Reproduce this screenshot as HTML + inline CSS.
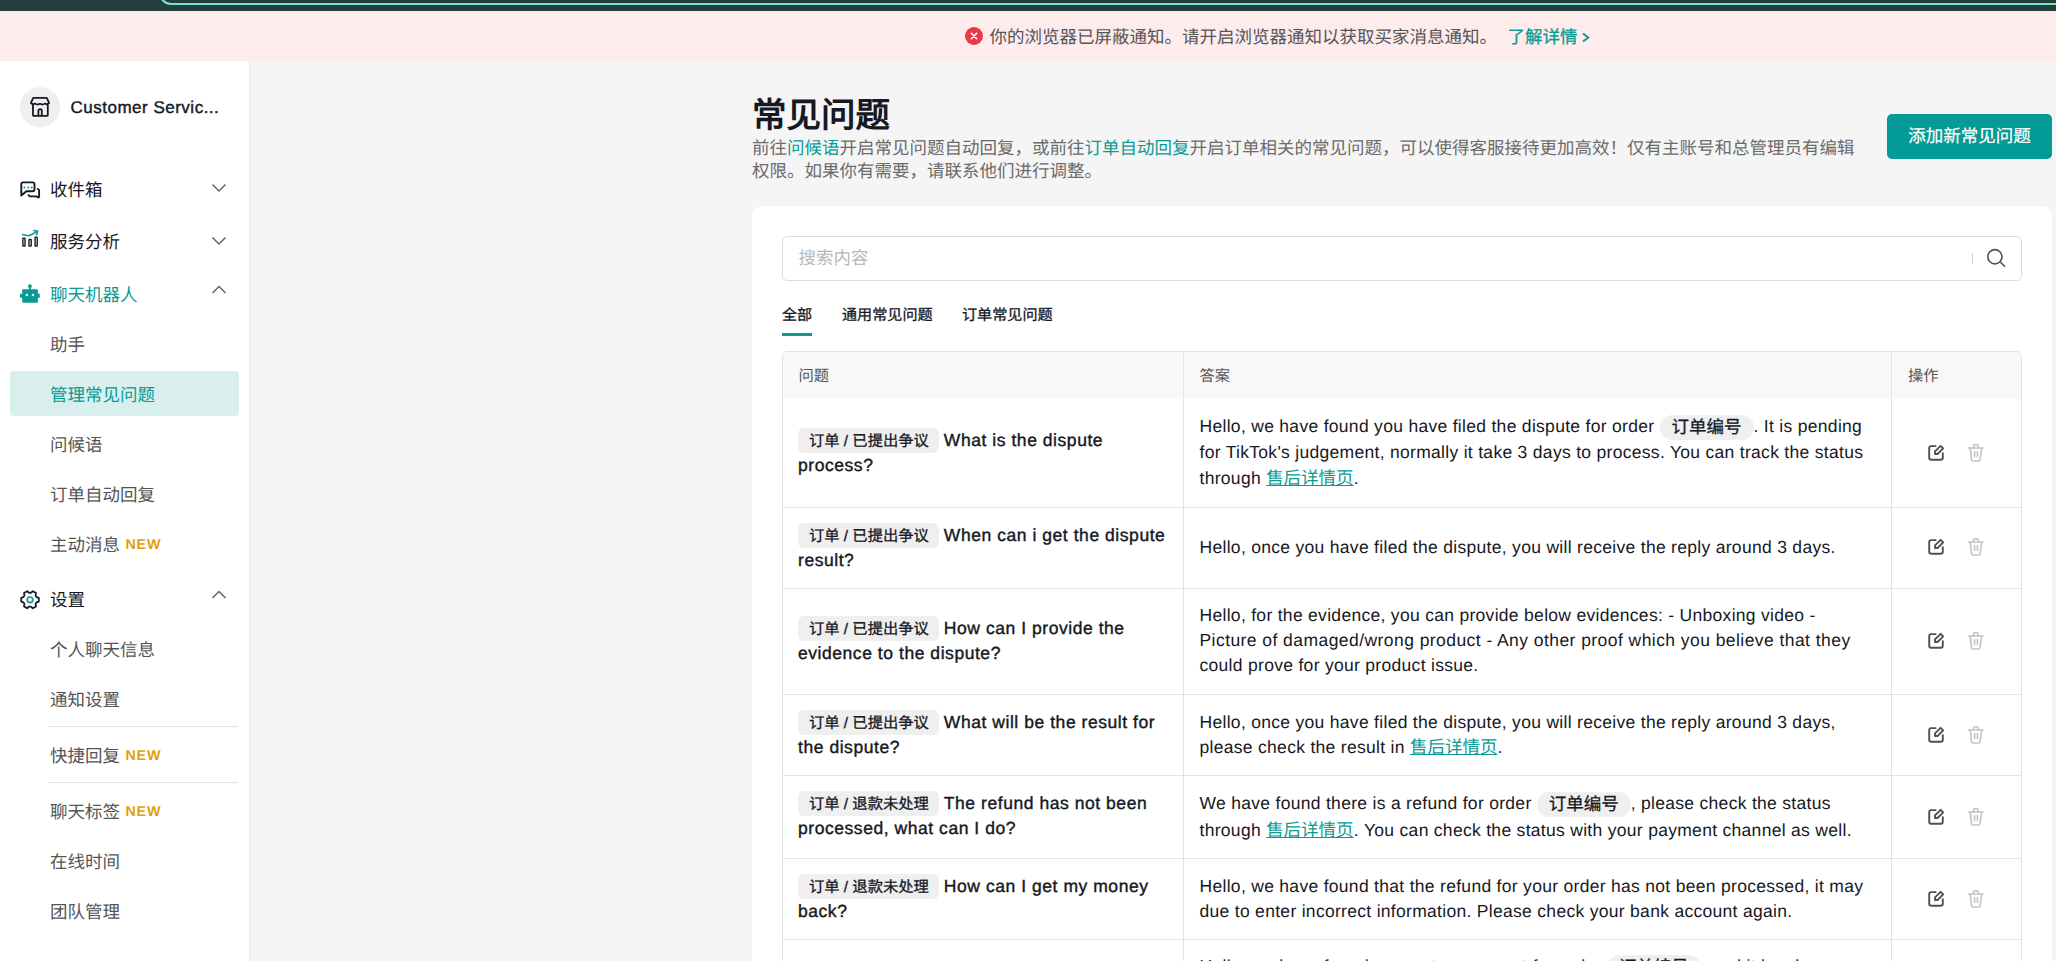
<!DOCTYPE html>
<html lang="zh-CN"><head><meta charset="utf-8">
<style>
*{box-sizing:border-box;margin:0;padding:0}
html,body{width:2056px;height:961px;overflow:hidden}
body{background:#f5f5f5;font-family:"Liberation Sans",sans-serif;color:#222;position:relative;text-rendering:geometricPrecision}
.abs{position:absolute}
#topbar{left:0;top:0;width:2056px;height:11px;background:#263e3b;overflow:hidden}
#topbar .ring{position:absolute;left:159px;top:-40px;width:2000px;height:45px;border:2px solid #76e3d3;border-radius:12px}
#banner{left:0;top:11px;width:2056px;height:50px;background:#feebec}
#sidebar{left:0;top:61px;width:249px;height:900px;background:#fff;box-shadow:1px 0 0 #ececec}
.mi{position:absolute;margin-top:1.5px;left:50px;font-size:17.5px;line-height:24px;white-space:nowrap;color:#161823}
.sub{color:#555}
.teal{color:#0a9a94}
.new{font-weight:700;font-size:14.3px;color:#e2a00b;margin-left:5.5px;letter-spacing:0.8px;position:relative;top:-2px}
.chev{position:absolute;left:210px;width:18px;height:12px}
.div{position:absolute;left:48px;width:190px;height:1px;background:#e3e3e3}
.sel{position:absolute;left:10px;top:371px;width:229px;height:45px;background:#d9efed;border-radius:4px}
.ico{position:absolute;left:16px;width:28px;height:26px}
.tl{color:#0a9a94}
.vl{top:351px;width:1px;height:700px;background:#e3e3e3}
.hl{left:782px;width:1240px;height:1px;background:#e3e3e3}
.th{top:365.5px;font-size:15.3px;line-height:22px;color:#555;white-space:nowrap}
.q{left:798px;font-size:17.5px;line-height:25px;font-weight:400;-webkit-text-stroke:0.4px #161823;letter-spacing:0.55px;color:#161823;white-space:nowrap}
.tag{letter-spacing:0;display:inline-block;vertical-align:top;height:25px;line-height:27px;padding:0 10px 0 11px;margin-right:5px;background:#efefef;border-radius:6px;font-size:15.3px;font-weight:400;-webkit-text-stroke:0.3px #161823}
.a{left:1199.5px;font-size:17.5px;line-height:25px;color:#161823;white-space:nowrap;letter-spacing:0.3px}
.pill{display:inline-block;vertical-align:top;margin-top:1px;height:25px;line-height:25px;padding:0 12px;background:#efefef;border-radius:13px;font-weight:400;-webkit-text-stroke:0.3px #161823;letter-spacing:0}
.lnk{color:#0a9a94;text-decoration:underline;letter-spacing:0}
.tab{font-size:15.1px;line-height:22px;color:#161823;white-space:nowrap;font-weight:400;-webkit-text-stroke:0.3px #161823}
</style></head><body>
<div id="topbar" class="abs"><div class="ring"></div></div>
<div id="banner" class="abs"></div>
<div id="sidebar" class="abs"></div>

<!-- sidebar content -->
<div class="abs" style="left:20px;top:87px;width:40px;height:40px;border-radius:50%;background:#efefef"></div>
<svg class="abs" style="left:20px;top:87px" width="40" height="40" viewBox="0 0 40 40" fill="none" stroke="#161823" stroke-width="1.8" stroke-linejoin="round">
<path d="M10.9 16.2 L12.8 11.6 Q13.1 10.9 13.9 10.9 H26.1 Q26.9 10.9 27.2 11.6 L29.1 16.2 Q27.1 18 24.8 16.6 Q22.4 18.4 20 16.6 Q17.6 18.4 15.2 16.6 Q12.9 18 10.9 16.2 Z"/>
<path d="M13 17.8 V27.9 a1 1 0 0 0 1 1 H26.8 a1 1 0 0 0 1 -1 V17.8"/>
<path d="M18.4 28.9 V23.9 a1.7 1.7 0 0 1 3.4 0 V28.9"/>
</svg>
<div class="abs" style="left:70.5px;top:95.5px;font-size:17px;font-weight:400;-webkit-text-stroke:0.4px #161823;letter-spacing:0.5px;line-height:24px;color:#161823;white-space:nowrap">Customer Servic...</div>

<svg class="ico" style="top:176px" viewBox="0 0 28 26" fill="none" stroke="#161823" stroke-width="1.9" stroke-linejoin="round" stroke-linecap="round">
<path d="M5.3 19.6 V8.4 a2 2 0 0 1 2-2 H16.5 a2 2 0 0 1 2 2 V13.3 a2 2 0 0 1 -2 2 H10.4 Z"/>
<path d="M21.7 12.9 Q23.1 13.3 23.1 14.6 V20.6 Q23.1 21.9 21.8 21.2 L20.4 20.4 H14.3 Q13.1 20.4 12.6 19.2"/>
<g fill="#0a9a94" stroke="none"><circle cx="8.4" cy="11.6" r="1"/><circle cx="12.2" cy="11.6" r="1"/><circle cx="15.7" cy="11.6" r="1"/></g>
</svg>
<div class="mi" style="top:176px">收件箱</div>
<svg class="chev" style="top:182px" viewBox="0 0 18 12" fill="none" stroke="#666" stroke-width="1.5"><path d="M2.5 2.5 L9 9 L15.5 2.5"/></svg>

<svg class="ico" style="top:225px" viewBox="0 0 28 26" fill="none" stroke="#161823" stroke-width="1.8" stroke-linejoin="round" stroke-linecap="round">
<rect x="6.85" y="13.05" width="2.2" height="7.9" rx="0.5" stroke-width="1.35" fill="#eee"/>
<rect x="12.95" y="14.45" width="2.3" height="6.5" rx="0.5" stroke-width="1.35" fill="#eee"/>
<rect x="19.05" y="12.05" width="2.2" height="8.9" rx="0.5" stroke-width="1.35" fill="#eee"/>
<g stroke="#0a9a94" stroke-width="1.6"><path d="M6.6 9.5 Q10 10.4 12.8 10.8 Q16.5 9.4 21 6.4"/><path d="M18 5.5 L21.5 6.1 L20.6 9.8"/></g>
</svg>
<div class="mi" style="top:228px">服务分析</div>
<svg class="chev" style="top:235px" viewBox="0 0 18 12" fill="none" stroke="#666" stroke-width="1.5"><path d="M2.5 2.5 L9 9 L15.5 2.5"/></svg>

<svg class="ico" style="top:280px" viewBox="0 0 28 26">
<g fill="#0a9a94"><circle cx="13.9" cy="6.2" r="1.9"/><rect x="12.9" y="6" width="2" height="4"/><rect x="6.2" y="9.2" width="15.7" height="13.5" rx="1"/><rect x="4" y="13.8" width="19.8" height="4" rx="0.5"/></g>
<g fill="#fff"><circle cx="10.9" cy="15.1" r="1.25"/><circle cx="17" cy="15.1" r="1.25"/></g>
</svg>
<div class="mi teal" style="top:281px">聊天机器人</div>
<svg class="chev" style="top:283.5px" viewBox="0 0 18 12" fill="none" stroke="#666" stroke-width="1.5"><path d="M2.5 9 L9 2.5 L15.5 9"/></svg>

<div class="mi sub" style="top:331px">助手</div>
<div class="sel"></div>
<div class="mi teal" style="top:381px">管理常见问题</div>
<div class="mi sub" style="top:431px">问候语</div>
<div class="mi sub" style="top:481px">订单自动回复</div>
<div class="mi sub" style="top:531px">主动消息<span class="new">NEW</span></div>

<svg class="ico" style="top:585px" viewBox="0 0 28 26" fill="none" stroke-linejoin="round">
<path stroke="#161823" stroke-width="1.75" d="M20.49 12.08 L22.80 12.83 L22.80 16.57 L20.49 17.32 L19.52 19.01 L20.02 21.39 L16.78 23.26 L14.97 21.63 L13.03 21.63 L11.22 23.26 L7.98 21.39 L8.48 19.01 L7.51 17.32 L5.20 16.57 L5.20 12.83 L7.51 12.08 L8.48 10.39 L7.98 8.01 L11.22 6.14 L13.03 7.77 L14.97 7.77 L16.78 6.14 L20.02 8.01 L19.52 10.39 Z"/>
<circle cx="14" cy="14.8" r="2.8" stroke="#0a9a94" stroke-width="1.7"/>
</svg>
<div class="mi" style="top:586px">设置</div>
<svg class="chev" style="top:588.7px" viewBox="0 0 18 12" fill="none" stroke="#666" stroke-width="1.5"><path d="M2.5 9 L9 2.5 L15.5 9"/></svg>

<div class="mi sub" style="top:636px">个人聊天信息</div>
<div class="mi sub" style="top:686px">通知设置</div>
<div class="div" style="top:726px"></div>
<div class="mi sub" style="top:742px">快捷回复<span class="new">NEW</span></div>
<div class="div" style="top:782px"></div>
<div class="mi sub" style="top:798px">聊天标签<span class="new">NEW</span></div>
<div class="mi sub" style="top:848px">在线时间</div>
<div class="mi sub" style="top:898px">团队管理</div>


<!-- banner content -->
<div class="abs" style="left:965px;top:27px;width:18px;height:18px;border-radius:50%;background:#e8394a"></div>
<svg class="abs" style="left:965px;top:27px" width="18" height="18" viewBox="0 0 18 18"><path d="M6.3 6.3 L11.7 11.7 M11.7 6.3 L6.3 11.7" stroke="#fff" stroke-width="1.6" stroke-linecap="round"/></svg>
<div class="abs" style="left:989.5px;top:24.5px;font-size:17.5px;line-height:24px;color:#555;white-space:nowrap">你的浏览器已屏蔽通知。请开启浏览器通知以获取买家消息通知。</div>
<div class="abs" style="left:1507.5px;top:24.5px;font-size:17.5px;line-height:24px;color:#0a9a94;white-space:nowrap;-webkit-text-stroke:0.3px #0a9a94">了解详情</div>
<svg class="abs" style="left:1580px;top:31px" width="12" height="13" viewBox="0 0 12 13" fill="none" stroke="#0a9a94" stroke-width="1.9"><path d="M3 2.5 L8.3 6.5 L3 10.5"/></svg>

<!-- header -->
<div class="abs" style="left:752px;top:95px;font-size:34.5px;line-height:42px;font-weight:700;color:#161823;white-space:nowrap">常见问题</div>
<div class="abs" style="left:752px;top:136.5px;font-size:17.5px;line-height:23.5px;color:#6b6b6b;white-space:nowrap">前往<span class="tl">问候语</span>开启常见问题自动回复，或前往<span class="tl">订单自动回复</span>开启订单相关的常见问题，可以使得客服接待更加高效！仅有主账号和总管理员有编辑<br>权限。如果你有需要，请联系他们进行调整。</div>
<div class="abs" style="left:1887px;top:114px;width:165px;height:45px;border-radius:5px;background:#049a95;color:#fff;font-size:17.5px;line-height:45px;text-align:center;white-space:nowrap;-webkit-text-stroke:0.2px #fff">添加新常见问题</div>

<!-- card -->
<div class="abs" style="left:752px;top:206px;width:1300px;height:800px;background:#fff;border-radius:10px"></div>
<div class="abs" style="left:782px;top:236px;width:1240px;height:45px;border:1px solid #dcdcdc;border-radius:5px"></div>
<div class="abs" style="left:798.5px;top:246px;font-size:17.5px;line-height:24px;color:#b8b8b8;white-space:nowrap">搜索内容</div>
<div class="abs" style="left:1972px;top:253px;width:1px;height:11px;background:#d0d0d0"></div>
<svg class="abs" style="left:1984px;top:247px" width="24" height="22" viewBox="0 0 24 22" fill="none" stroke="#505050" stroke-width="1.6" stroke-linecap="round"><circle cx="10.9" cy="9.75" r="7.1"/><path d="M16.3 15 L20.6 19.2"/></svg>

<!-- tabs -->
<div class="abs tab" style="left:782px;top:304.5px">全部</div>
<div class="abs tab" style="left:842px;top:304.5px">通用常见问题</div>
<div class="abs tab" style="left:962px;top:304.5px">订单常见问题</div>
<div class="abs" style="left:782px;top:333px;width:30px;height:3px;background:#0a9a94"></div>





<!-- table -->
<div class="abs" style="left:782px;top:351px;width:1240px;height:700px;border:1px solid #e3e3e3;border-radius:5px 5px 0 0;overflow:hidden"><div style="height:47px;background:#f8f8f8"></div></div>
<div class="abs vl" style="left:1183px"></div><div class="abs vl" style="left:1891px"></div>
<div class="abs th" style="left:798.5px">问题</div><div class="abs th" style="left:1199.5px">答案</div><div class="abs th" style="left:1908px">操作</div>
<div class="abs q" style="top:428px"><span class="tag">订单 / 已提出争议</span>What is the dispute</div>
<div class="abs q" style="top:453px">process?</div>
<div class="abs a" style="top:414px">Hello, we have found you have filed the dispute for order <span class="pill">订单编号</span>. It is pending</div>
<div class="abs a" style="top:440px">for TikTok's judgement, normally it take 3 days to process. You can track the status</div>
<div class="abs a" style="top:466px">through <span class="lnk">售后详情页</span>.</div>
<svg class="abs" style="left:1920px;top:438px" width="70" height="30" viewBox="0 0 70 30" fill="none" stroke-linecap="round" stroke-linejoin="round"><g stroke="#505050" stroke-width="1.9"><path d="M15.6 8.15 H11.2 a2 2 0 0 0 -2 2 V19.8 a2 2 0 0 0 2 2 H20.8 a2 2 0 0 0 2 -2 V15.2"/><path d="M15 16 V13.4 L20.6 7.8 L23.2 10.4 L17.6 16 Z"/></g><g stroke="#c4c4c4" stroke-width="1.6"><path d="M48.6 10 H63"/><path d="M53.4 9.8 V8.8 a2.5 2.3 0 0 1 5 0 V9.8"/><path d="M50.3 10.2 L51.5 21.6 a1.6 1.6 0 0 0 1.6 1.4 H58.5 a1.6 1.6 0 0 0 1.6 -1.4 L61.7 10.2"/><path d="M54.6 13.5 V18.5 M57.4 13.5 V18.5"/></g></svg>
<div class="abs hl" style="top:507px"></div>
<div class="abs q" style="top:523px"><span class="tag">订单 / 已提出争议</span>When can i get the dispute</div>
<div class="abs q" style="top:548px">result?</div>
<div class="abs a" style="top:535px">Hello, once you have filed the dispute, you will receive the reply around 3 days.</div>
<svg class="abs" style="left:1920px;top:532px" width="70" height="30" viewBox="0 0 70 30" fill="none" stroke-linecap="round" stroke-linejoin="round"><g stroke="#505050" stroke-width="1.9"><path d="M15.6 8.15 H11.2 a2 2 0 0 0 -2 2 V19.8 a2 2 0 0 0 2 2 H20.8 a2 2 0 0 0 2 -2 V15.2"/><path d="M15 16 V13.4 L20.6 7.8 L23.2 10.4 L17.6 16 Z"/></g><g stroke="#c4c4c4" stroke-width="1.6"><path d="M48.6 10 H63"/><path d="M53.4 9.8 V8.8 a2.5 2.3 0 0 1 5 0 V9.8"/><path d="M50.3 10.2 L51.5 21.6 a1.6 1.6 0 0 0 1.6 1.4 H58.5 a1.6 1.6 0 0 0 1.6 -1.4 L61.7 10.2"/><path d="M54.6 13.5 V18.5 M57.4 13.5 V18.5"/></g></svg>
<div class="abs hl" style="top:588px"></div>
<div class="abs q" style="top:616px"><span class="tag">订单 / 已提出争议</span>How can I provide the</div>
<div class="abs q" style="top:641px">evidence to the dispute?</div>
<div class="abs a" style="top:603px">Hello, for the evidence, you can provide below evidences: - Unboxing video -</div>
<div class="abs a" style="top:628px"><span style="letter-spacing:0.44px">Picture of damaged/wrong product - Any other proof which you believe that they</span></div>
<div class="abs a" style="top:653px">could prove for your product issue.</div>
<svg class="abs" style="left:1920px;top:626px" width="70" height="30" viewBox="0 0 70 30" fill="none" stroke-linecap="round" stroke-linejoin="round"><g stroke="#505050" stroke-width="1.9"><path d="M15.6 8.15 H11.2 a2 2 0 0 0 -2 2 V19.8 a2 2 0 0 0 2 2 H20.8 a2 2 0 0 0 2 -2 V15.2"/><path d="M15 16 V13.4 L20.6 7.8 L23.2 10.4 L17.6 16 Z"/></g><g stroke="#c4c4c4" stroke-width="1.6"><path d="M48.6 10 H63"/><path d="M53.4 9.8 V8.8 a2.5 2.3 0 0 1 5 0 V9.8"/><path d="M50.3 10.2 L51.5 21.6 a1.6 1.6 0 0 0 1.6 1.4 H58.5 a1.6 1.6 0 0 0 1.6 -1.4 L61.7 10.2"/><path d="M54.6 13.5 V18.5 M57.4 13.5 V18.5"/></g></svg>
<div class="abs hl" style="top:694px"></div>
<div class="abs q" style="top:710px"><span class="tag">订单 / 已提出争议</span>What will be the result for</div>
<div class="abs q" style="top:735px">the dispute?</div>
<div class="abs a" style="top:710px">Hello, once you have filed the dispute, you will receive the reply around 3 days,</div>
<div class="abs a" style="top:735px">please check the result in <span class="lnk">售后详情页</span>.</div>
<svg class="abs" style="left:1920px;top:720px" width="70" height="30" viewBox="0 0 70 30" fill="none" stroke-linecap="round" stroke-linejoin="round"><g stroke="#505050" stroke-width="1.9"><path d="M15.6 8.15 H11.2 a2 2 0 0 0 -2 2 V19.8 a2 2 0 0 0 2 2 H20.8 a2 2 0 0 0 2 -2 V15.2"/><path d="M15 16 V13.4 L20.6 7.8 L23.2 10.4 L17.6 16 Z"/></g><g stroke="#c4c4c4" stroke-width="1.6"><path d="M48.6 10 H63"/><path d="M53.4 9.8 V8.8 a2.5 2.3 0 0 1 5 0 V9.8"/><path d="M50.3 10.2 L51.5 21.6 a1.6 1.6 0 0 0 1.6 1.4 H58.5 a1.6 1.6 0 0 0 1.6 -1.4 L61.7 10.2"/><path d="M54.6 13.5 V18.5 M57.4 13.5 V18.5"/></g></svg>
<div class="abs hl" style="top:775px"></div>
<div class="abs q" style="top:791px"><span class="tag">订单 / 退款未处理</span>The refund has not been</div>
<div class="abs q" style="top:816px">processed, what can I do?</div>
<div class="abs a" style="top:791px">We have found there is a refund for order <span class="pill">订单编号</span>, please check the status</div>
<div class="abs a" style="top:818px">through <span class="lnk">售后详情页</span>. You can check the status with your payment channel as well.</div>
<svg class="abs" style="left:1920px;top:802px" width="70" height="30" viewBox="0 0 70 30" fill="none" stroke-linecap="round" stroke-linejoin="round"><g stroke="#505050" stroke-width="1.9"><path d="M15.6 8.15 H11.2 a2 2 0 0 0 -2 2 V19.8 a2 2 0 0 0 2 2 H20.8 a2 2 0 0 0 2 -2 V15.2"/><path d="M15 16 V13.4 L20.6 7.8 L23.2 10.4 L17.6 16 Z"/></g><g stroke="#c4c4c4" stroke-width="1.6"><path d="M48.6 10 H63"/><path d="M53.4 9.8 V8.8 a2.5 2.3 0 0 1 5 0 V9.8"/><path d="M50.3 10.2 L51.5 21.6 a1.6 1.6 0 0 0 1.6 1.4 H58.5 a1.6 1.6 0 0 0 1.6 -1.4 L61.7 10.2"/><path d="M54.6 13.5 V18.5 M57.4 13.5 V18.5"/></g></svg>
<div class="abs hl" style="top:858px"></div>
<div class="abs q" style="top:874px"><span class="tag">订单 / 退款未处理</span>How can I get my money</div>
<div class="abs q" style="top:899px">back?</div>
<div class="abs a" style="top:874px">Hello, we have found that the refund for your order has not been processed, it may</div>
<div class="abs a" style="top:899px">due to enter incorrect information. Please check your bank account again.</div>
<svg class="abs" style="left:1920px;top:884px" width="70" height="30" viewBox="0 0 70 30" fill="none" stroke-linecap="round" stroke-linejoin="round"><g stroke="#505050" stroke-width="1.9"><path d="M15.6 8.15 H11.2 a2 2 0 0 0 -2 2 V19.8 a2 2 0 0 0 2 2 H20.8 a2 2 0 0 0 2 -2 V15.2"/><path d="M15 16 V13.4 L20.6 7.8 L23.2 10.4 L17.6 16 Z"/></g><g stroke="#c4c4c4" stroke-width="1.6"><path d="M48.6 10 H63"/><path d="M53.4 9.8 V8.8 a2.5 2.3 0 0 1 5 0 V9.8"/><path d="M50.3 10.2 L51.5 21.6 a1.6 1.6 0 0 0 1.6 1.4 H58.5 a1.6 1.6 0 0 0 1.6 -1.4 L61.7 10.2"/><path d="M54.6 13.5 V18.5 M57.4 13.5 V18.5"/></g></svg>
<div class="abs hl" style="top:939px"></div>
<div class="abs q" style="top:975px"><span class="tag">订单 / 退款未处理</span>How long will it take to get</div>
<div class="abs q" style="top:1000px">my refund?</div>
<div class="abs a" style="top:954px">Hello, we have found your return request for order <span class="pill">订单编号</span>, and it has been</div>
<div class="abs a" style="top:981px">processed.</div>
<!-- /table -->
</body></html>
